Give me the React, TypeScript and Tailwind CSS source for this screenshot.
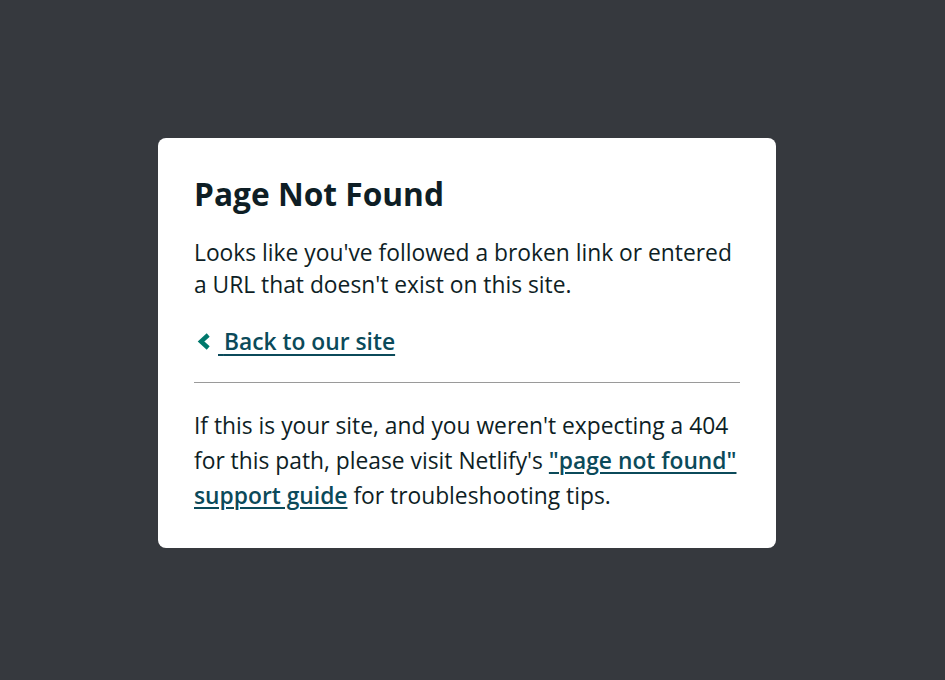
import React from 'react';

const font = { fontFamily: '"Open Sans", "Liberation Sans", sans-serif' };

const ChevronLeft = () => (
  <svg width="15" height="17" viewBox="0 0 15 17" className="inline-block ml-[2px] mr-[7px] -mt-[4px]" aria-hidden="true">
    <path d="M12.2 2 L5 8.5 L12.2 15" fill="none" stroke="#00786c" strokeWidth="4.4" strokeLinecap="butt" strokeLinejoin="miter" />
  </svg>
);

export default function App() {
  return (
    <div className="min-h-screen bg-[#36393e] pt-[138px] pl-[158px]" style={font}>
      <div className="w-[618px] h-[410px] bg-white rounded-[8px] px-[36px] pt-[34px] text-[#0e1e25]">
        <h1 className="text-[31.7px] font-bold leading-[44px]">Page Not Found</h1>
        <p className="mt-[21px] text-[22.8px] leading-[32px]">
          Looks like you've followed a broken link or entered a URL that doesn't exist on this site.
        </p>
        <div className="mt-[25px] text-[22.8px] leading-[32px]">
          <ChevronLeft />
          <a href="#" className="font-semibold text-[#0b4a5a] underline decoration-[2px] underline-offset-[4px]">
            {' '}Back to our site
          </a>
        </div>
        <hr className="mt-[24px] border-0 border-t border-[#9a9a9a]" />
        <p className="mt-[25px] text-[22.8px] leading-[35px]">
          If this is your site, and you weren't expecting a 404 for this path, please visit Netlify's{' '}
          <a href="#" className="font-semibold text-[#0b4a5a] underline decoration-[2px] underline-offset-[3px]">
            "page not found" support guide
          </a>{' '}
          for troubleshooting tips.
        </p>
      </div>
    </div>
  );
}
